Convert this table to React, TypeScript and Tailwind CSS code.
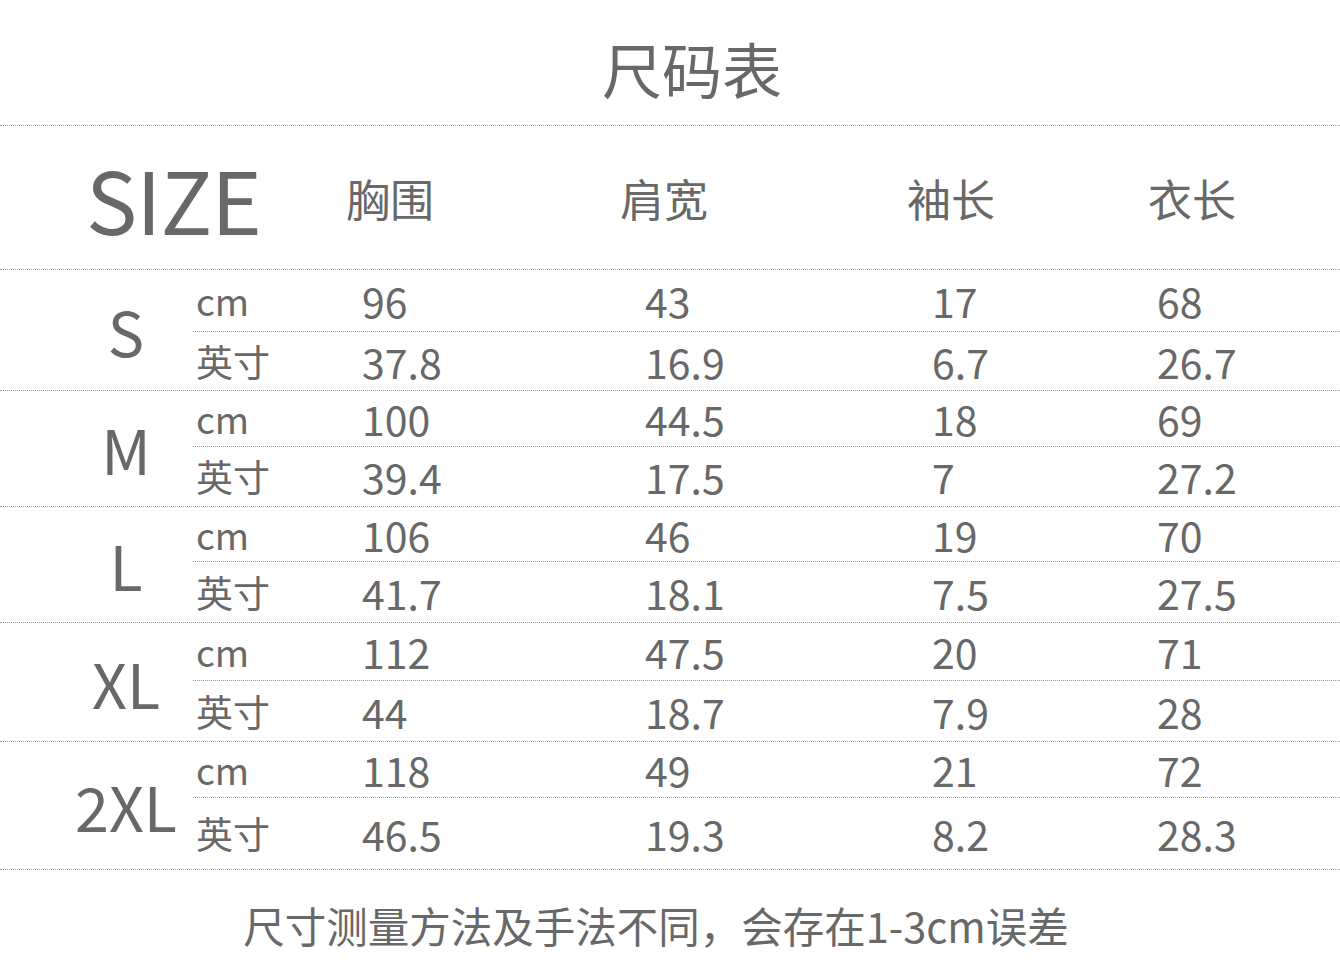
// Size chart (尺码表)

interface SizeGroup {
  size: string;
  cmHeight: string;
  inchHeight: string;
  cm: string[];
  inch: string[];
}

const groups: SizeGroup[] = [
  { size: "S", cmHeight: "h-[62px]", inchHeight: "h-[58px]", cm: ["96", "43", "17", "68"], inch: ["37.8", "16.9", "6.7", "26.7"] },
  { size: "M", cmHeight: "h-[56px]", inchHeight: "h-[59px]", cm: ["100", "44.5", "18", "69"], inch: ["39.4", "17.5", "7", "27.2"] },
  { size: "L", cmHeight: "h-[55px]", inchHeight: "h-[60px]", cm: ["106", "46", "19", "70"], inch: ["41.7", "18.1", "7.5", "27.5"] },
  { size: "XL", cmHeight: "h-[58px]", inchHeight: "h-[60px]", cm: ["112", "47.5", "20", "71"], inch: ["44", "18.7", "7.9", "28"] },
  { size: "2XL", cmHeight: "h-[56px]", inchHeight: "h-[71px]", cm: ["118", "49", "21", "72"], inch: ["46.5", "19.3", "8.2", "28.3"] },
];

const line = "border-b border-dotted border-[#9a9a9a]";

function ValueRow({ unit, values, height, last }: { unit: string; values: string[]; height: string; last?: boolean }) {
  return (
    <div
      className={`grid grid-cols-[169px_283px_287px_225px_1fr] items-center ${height} ${last ? "" : line}`}
    >
      <span className="pl-[3px] text-[37px] leading-none">{unit}</span>
      {values.map((v, i) => (
        <span key={i} className="text-[41px] leading-none">
          {v}
        </span>
      ))}
    </div>
  );
}

export default function App() {
  return (
    <div
      className="w-[1340px] h-[975px] bg-white text-[#686868] overflow-hidden"
      style={{ fontFamily: '"Noto Sans CJK SC", "Noto Sans", sans-serif' }}
    >
      {/* Title */}
      <div className={`h-[126px] flex items-center justify-center pt-[10px] pl-[44px] ${line}`}>
        <h1 className="text-[60px] leading-none font-normal">尺码表</h1>
      </div>

      {/* Header */}
      <div className={`h-[144px] grid grid-cols-[346px_274px_287px_241px_1fr] items-center ${line}`}>
        <span className="pl-[86px] text-[86px] leading-none tracking-[-1px]">SIZE</span>
        <span className="text-[44px] leading-none">胸围</span>
        <span className="text-[44px] leading-none">肩宽</span>
        <span className="text-[44px] leading-none">袖长</span>
        <span className="text-[44px] leading-none">衣长</span>
      </div>

      {/* Rows */}
      {groups.map((g) => (
        <div key={g.size} className={`flex ${line}`}>
          <div className="w-[193px] pl-[59px] flex items-center justify-center">
            <span className="text-[61px] leading-none">{g.size}</span>
          </div>
          <div className="flex-1 flex flex-col">
            <ValueRow unit="cm" values={g.cm} height={g.cmHeight} />
            <ValueRow unit="英寸" values={g.inch} height={g.inchHeight} last />
          </div>
        </div>
      ))}

      {/* Footer note */}
      <div className="flex justify-center pt-[35px] pr-[28px]">
        <p className="text-[41.5px] leading-none">尺寸测量方法及手法不同，会存在1-3cm误差</p>
      </div>
    </div>
  );
}
